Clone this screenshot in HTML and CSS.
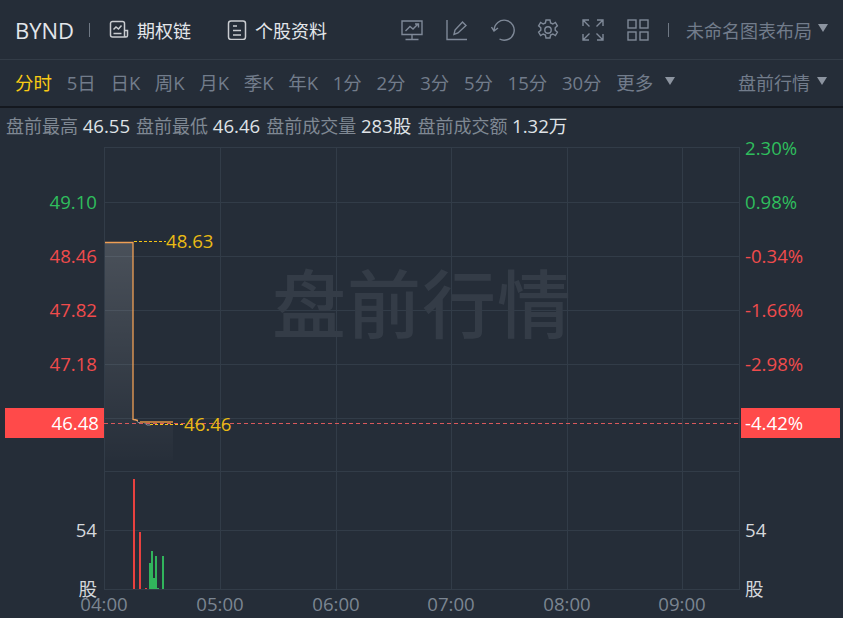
FILE: index.html
```html
<!DOCTYPE html>
<html>
<head>
    <title>BYND 盘前行情</title>
    <link rel="stylesheet" href="styles.css">
</head>
<body>
    <!-- Top toolbar -->
    <div class="topbar">
        <span class="symbol">BYND</span>
        <span class="sep sep-symbol"></span>
        <span class="link link-options">
            <svg class="link-icon" viewBox="0 0 20 20"><path d="M3.500 1.500h10a2 2 0 0 1 2 2v13.500h-12a2 2 0 0 1-2-2v-11.500a2 2 0 0 1 2-2zM15.500 10.500h3v5a1.500 1.500 0 0 1-3 0M4.500 9.500l2.500-2.500 2.500 2 3-3.500M4.500 13.500h8"/></svg>
            期权链
        </span>
        <span class="link link-profile">
            <svg class="link-icon" viewBox="0 0 20 20"><rect x="1.500" y="1" width="17" height="18.500" rx="2.500"/><path d="M6 6h4M6 10.500h8M6 15h8"/></svg>
            个股资料
        </span>
        <span class="tools">
            <svg class="tool" viewBox="0 0 22 22"><path d="M1 2h20v13.500h-20zM11 15.500v4.500M4.500 20.500h13M4.500 12l4.500-4.500 3 2.500 5-5M14 5h3.500v3.500"/></svg>
            <svg class="tool" viewBox="0 0 22 22"><path d="M1 1v19.500h20M8 15.500l1-4.500 7.500-8 3.500 3.500-8 7.500z"/></svg>
            <svg class="tool tool-wide" viewBox="0 0 24 22"><path d="M8.500 20a10 10 0 1 0-5.300-9M.5 8l2.500 4 4-3"/></svg>
            <svg class="tool" viewBox="0 0 22 22"><path d="M9 1h4l.6 3 2.200 1 2.600-1.600 2 3.400-2.200 2v2.400l2.200 2-2 3.400-2.600-1.600-2.200 1-.6 3h-4l-.6-3-2.200-1-2.600 1.600-2-3.400 2.200-2v-2.400l-2.200-2 2-3.400 2.600 1.600 2.200-1z"/><circle cx="11" cy="11" r="3.200"/></svg>
            <svg class="tool" viewBox="0 0 22 22"><path d="M1 7v-6h6M21 7v-6h-6M1 15v6h6M21 15v6h-6M1.500 1.500l6 6M20.500 1.500l-6 6M1.500 20.500l6-6M20.500 20.500l-6-6"/></svg>
            <svg class="tool" viewBox="0 0 22 22"><rect x="1" y="1" width="8" height="8"/><rect x="13" y="1" width="8" height="8"/><rect x="1" y="13" width="8" height="8"/><rect x="13" y="13" width="8" height="8"/></svg>
        </span>
        <span class="sep sep-layout"></span>
        <span class="dropdown">未命名图表布局<i class="caret"></i></span>
    </div>

    <!-- Period tabs -->
    <div class="tabs">
        <span class="tab active">分时</span>
        <span class="tab">5日</span>
        <span class="tab">日K</span>
        <span class="tab">周K</span>
        <span class="tab">月K</span>
        <span class="tab">季K</span>
        <span class="tab">年K</span>
        <span class="tab">1分</span>
        <span class="tab">2分</span>
        <span class="tab">3分</span>
        <span class="tab">5分</span>
        <span class="tab">15分</span>
        <span class="tab">30分</span>
        <span class="tab tab-more">更多<i class="caret"></i></span>
        <span class="dropdown session">盘前行情<i class="caret"></i></span>
    </div>

    <!-- Session stats -->
    <div class="stats">
        <span>盘前最高 <b>46.55</b></span>
        <span>盘前最低 <b>46.46</b></span>
        <span>盘前成交量 <b>283股</b></span>
        <span>盘前成交额 <b>1.32万</b></span>
    </div>

    <!-- Chart -->
    <svg class="chart" viewBox="0 134 843 484" width="843" height="484">
        <defs>
            <linearGradient id="area" x1="0" y1="0" x2="0" y2="1">
                <stop offset="0" stop-color="#fff" stop-opacity=".17"/>
                <stop offset="1" stop-color="#fff" stop-opacity=".01"/>
            </linearGradient>
        </defs>

        <path class="grid" d="M104.500 147.500h635M104.500 202.500h635M104.500 256.500h635M104.500 310.500h635M104.500 364.500h635M104.500 418.500h635M104.500 471.500h635M104.500 530.500h635M104.500 589.500h635"/>
        <path class="grid" d="M104.500 147v443M220.500 147v443M336.500 147v443M451.500 147v443M567.500 147v443M682.500 147v443M739.500 147v443"/>

        <text class="watermark" x="422" y="332" text-anchor="middle">盘前行情</text>

        <path d="M105 242h28v179l8 2 9 2 23-1v36h-68z" fill="url(#area)"/>
        <path class="last-line" d="M104 423.500h635"/>
        <path class="avg" d="M134 419.500h2l2 3h6l3 2.500h3l2-1"/>
        <path class="price" d="M105 242.500h28v177l5 1"/>
        <path class="price-tail" d="M140 422h33"/>
        <path class="price-guide" d="M134 241.500h32M150 424.500h33"/>

        <g class="bars-up">
            <rect x="133" y="479" width="2" height="110"/>
            <rect x="139" y="532" width="2" height="57"/>
            <rect x="145" y="588" width="2" height="1"/>
        </g>
        <g class="bars-down">
            <rect x="149" y="563" width="2" height="26"/>
            <rect x="151" y="551" width="2" height="38"/>
            <rect x="153" y="578" width="2" height="11"/>
            <rect x="155" y="556" width="2" height="33"/>
            <rect x="157" y="588" width="2" height="1"/>
            <rect x="162" y="556" width="2" height="33"/>
        </g>

        <rect class="tag" x="5" y="408" width="99" height="30"/>
        <rect class="tag" x="741" y="408" width="99" height="30"/>

        <g class="label-left">
            <text class="up" x="97" y="209">49.10</text>
            <text class="down" x="97" y="263">48.46</text>
            <text class="down" x="97" y="317">47.82</text>
            <text class="down" x="97" y="371">47.18</text>
            <text class="tag-text" x="99" y="430">46.48</text>
            <text class="plain" x="97" y="537">54</text>
            <text class="plain" x="97" y="596">股</text>
        </g>
        <g class="label-right">
            <text class="up" x="745" y="155">2.30%</text>
            <text class="up" x="745" y="209">0.98%</text>
            <text class="down" x="745" y="263">-0.34%</text>
            <text class="down" x="745" y="317">-1.66%</text>
            <text class="down" x="745" y="371">-2.98%</text>
            <text class="tag-text" x="745" y="430">-4.42%</text>
            <text class="plain" x="745" y="537">54</text>
            <text class="plain" x="745" y="596">股</text>
        </g>

        <text class="price-label" x="166" y="248">48.63</text>
        <text class="price-label" x="184" y="431">46.46</text>

        <g class="label-time">
            <text x="104" y="611">04:00</text>
            <text x="220" y="611">05:00</text>
            <text x="336" y="611">06:00</text>
            <text x="451" y="611">07:00</text>
            <text x="567" y="611">08:00</text>
            <text x="682" y="611">09:00</text>
        </g>
    </svg>
</body>
</html>
```
FILE: styles.css
```css
html, body { margin: 0; padding: 0; }
body { width: 843px; height: 618px; overflow: hidden; background: #252d38; font-family: "Open Sans", "Noto Sans CJK SC", sans-serif; font-size: 18px; font-weight: 400; color: #727c8b; }

.topbar { display: flex; align-items: center; height: 59px; padding-left: 15px; border-bottom: 1px solid #333c47; }
.symbol { font-size: 22px; color: #e3e6ea; width: 59px; }
.sep { width: 1px; height: 14px; background: #6f7884; }
.sep-symbol { margin-left: 15px; }
.link { display: flex; align-items: center; color: #e3e6ea; }
.link-options { width: 99px; margin-left: 19px; }
.link-profile { margin-left: 19px; }
.link-icon { width: 20px; height: 20px; margin-right: 8px; fill: none; stroke: #c9ccd0; stroke-width: 1.500; }
.tools { display: flex; align-items: center; gap: 23px; margin-left: 74px; }
.tool { width: 22px; height: 22px; fill: none; stroke: #7f8998; stroke-width: 1.400; }
.tool-wide { width: 24px; margin-right: -1px; }
.sep-layout { margin-left: 19px; }
.dropdown { display: flex; align-items: center; margin-left: 17px; }
.caret { display: inline-block; width: 0; height: 0; margin-left: 6px; margin-top: -3px; border-left: 5px solid transparent; border-right: 5px solid transparent; border-top: 8px solid #8c94a0; }

.tabs { display: flex; align-items: center; gap: 14.650px; box-sizing: content-box; height: 44px; padding: 0 0 2px 15px; border-bottom: 2px solid #14181f; }
.tab { white-space: nowrap; font-size: 18.500px; }
.tab.active { color: #f9cb14; }
.tab-more { display: flex; align-items: center; }
.tab-more .caret { margin-left: 12px; }
.session { margin-left: auto; margin-right: 16px; }
.session .caret { margin-left: 7px; }

.stats { display: flex; gap: 6px; box-sizing: border-box; height: 26px; padding: 8px 0 0 6px; line-height: 20px; white-space: nowrap; color: #7f8893; }
.stats b { font-weight: 400; font-size: 18.600px; color: #dfe2e6; }

.chart { display: block; }
.chart text { font-size: 18.600px; }
.grid { fill: none; stroke: #323c48; stroke-width: 1; }
.chart .watermark { font-size: 74px; font-weight: 500; fill: #343c47; letter-spacing: 1px; }
.last-line { fill: none; stroke: #d9595c; stroke-width: 1; stroke-dasharray: 4 3; }
.price { fill: none; stroke: #ef9f55; stroke-width: 1.300; }
.price-tail { fill: none; stroke: #b57a3f; stroke-width: 2; }
.avg { fill: none; stroke: #8a8f96; stroke-width: 1; }
.price-guide { fill: none; stroke: #f5c518; stroke-width: 1; stroke-dasharray: 3 2; }
.bars-up { fill: #e8413f; }
.bars-down { fill: #31b45c; }
.tag { fill: #ff4a4a; }
.label-left { text-anchor: end; }
.up { fill: #2fbe5d; }
.down { fill: #f04b4c; }
.plain { fill: #d5d8dc; }
.tag-text { fill: #fff; }
.price-label { fill: #eabb14; }
.label-time { text-anchor: middle; fill: #7b8591; }
```
